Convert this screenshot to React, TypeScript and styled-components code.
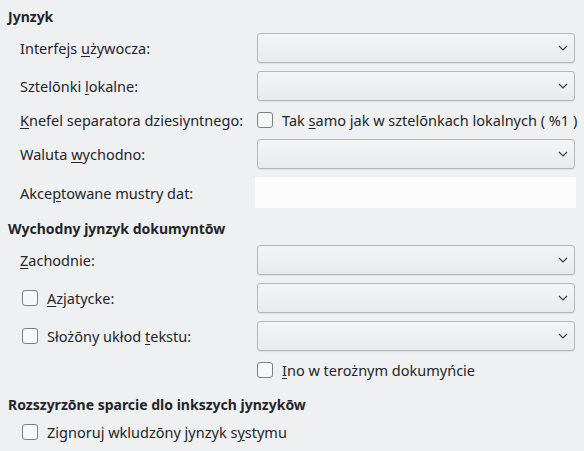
import React from "react";
import styled, { createGlobalStyle } from "styled-components";

const Global = createGlobalStyle`
  html, body { margin: 0; padding: 0; background: #eff0f1; }
  body { font-family: "Noto Sans", "Open Sans", sans-serif; font-size: 14.5px; color: #232629; }
`;

const Page = styled.div`
  width: 584px;
  height: 451px;
  box-sizing: border-box;
  padding: 7px 8px 0 8px;
  display: flex;
  flex-direction: column;
  overflow: hidden;
`;

const Section = styled.section<{ $top?: number }>`
  display: flex;
  flex-direction: column;
  gap: 6px;
  margin-top: ${(p) => p.$top ?? 0}px;
`;

const Title = styled.div`
  font-weight: 700;
  font-size: 14px;
  height: 20px;
  line-height: 20px;
`;

const Grid = styled.div`
  display: grid;
  grid-template-columns: 235px minmax(0, 1fr);
  row-gap: 8px;
  margin-left: 12px;
`;

const Label = styled.div`
  display: flex;
  align-items: center;
  white-space: nowrap;
`;

const Combo = styled.div`
  height: 30px;
  box-sizing: border-box;
  margin: 0 1px 0 2px;
  border: 1px solid #b6b8ba;
  border-radius: 3px;
  background: linear-gradient(#f3f4f4, #e9eaeb);
  box-shadow: 0 1px 1px rgba(0, 0, 0, 0.08);
  display: flex;
  align-items: center;
  justify-content: flex-end;
  padding-right: 6px;
`;

const LineEdit = styled.div`
  height: 31px;
  background: #fcfcfc;
`;

const CheckRow = styled.label`
  display: flex;
  align-items: center;
  align-self: center;
  gap: 9px;
  height: 22px;
  margin-left: 2px;
  white-space: nowrap;
`;

const Box = styled.span`
  width: 16px;
  height: 16px;
  box-sizing: border-box;
  border: 1px solid #7d8082;
  border-radius: 3px;
  background: #f7f7f8;
  flex: none;
`;

const U = styled.span`
  text-decoration: underline;
  text-underline-offset: 2px;
  text-decoration-thickness: 1px;
`;

const Chevron = () => (
  <svg width="10" height="6" viewBox="0 0 10 6">
    <path d="M1 1 L5 5 L9 1" fill="none" stroke="#3b3e41" strokeWidth="1.2" />
  </svg>
);

const Select = () => (
  <Combo>
    <Chevron />
  </Combo>
);

export default function App() {
  return (
    <>
      <Global />
      <Page>
        <Section>
          <Title>Jynzyk</Title>
          <Grid>
            <Label><span>Interfejs <U>u</U>żywocza:</span></Label>
            <Select />
            <Label><span>Sztelōnki <U>l</U>okalne:</span></Label>
            <Select />
            <Label><span><U>K</U>nefel separatora dziesiyntnego:</span></Label>
            <CheckRow>
              <Box />
              <span>Tak <U>s</U>amo jak w sztelōnkach lokalnych ( %1 )</span>
            </CheckRow>
            <Label><span>Waluta <U>w</U>ychodno:</span></Label>
            <Select />
            <Label><span>Akce<U>p</U>towane mustry dat:</span></Label>
            <LineEdit />
          </Grid>
        </Section>
        <Section $top={11}>
          <Title>Wychodny jynzyk dokumyntōw</Title>
          <Grid>
            <Label><span><U>Z</U>achodnie:</span></Label>
            <Select />
            <CheckRow>
              <Box />
              <span><U>A</U>zjatycke:</span>
            </CheckRow>
            <Select />
            <CheckRow>
              <Box />
              <span>Słożōny ukłod <U>t</U>ekstu:</span>
            </CheckRow>
            <Select />
            <span />
            <CheckRow>
              <Box />
              <span><U>I</U>no w terożnym dokumyńcie</span>
            </CheckRow>
          </Grid>
        </Section>
        <Section $top={14}>
          <Title>Rozszyrzōne sparcie dlo inkszych jynzykōw</Title>
          <Grid>
            <CheckRow>
              <Box />
              <span>Zignoruj wkludzōny jynzyk s<U>y</U>stymu</span>
            </CheckRow>
          </Grid>
        </Section>
      </Page>
    </>
  );
}
